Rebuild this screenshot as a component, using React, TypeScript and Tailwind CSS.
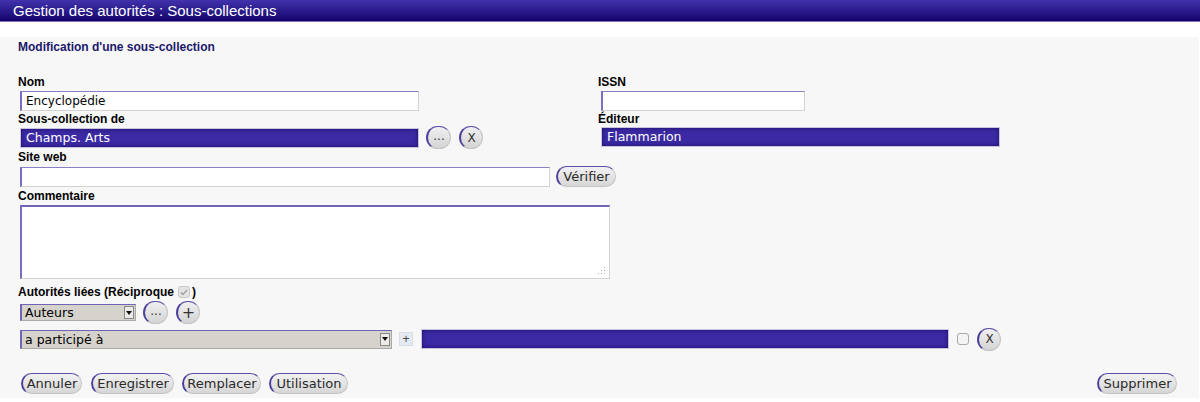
import React from 'react';

const labelCls = 'block text-[12px] font-bold leading-[16px] text-black';
const inputCls =
    'h-[20px] bg-white border border-[#d2d2d2] border-t-[#8a80c6] border-l-2 border-l-[#7a6fbe] px-[4px] font-["DejaVu_Sans"] text-[12px] leading-[18px] text-black';
const purpleField =
    'h-[20px] bg-[#3b2aa3] border border-[#c8c4dc] shadow-[inset_0_0_4px_rgba(20,5,90,0.8)] px-[5px] font-["DejaVu_Sans"] text-[12.5px] leading-[18px] text-white';

function Pill({ children, className = '' }: { children: React.ReactNode; className?: string }) {
    return (
        <button
            className={`h-[21px] rounded-full bg-gradient-to-b from-[#f2f2f2] to-[#d6d6d6] border border-[#c4c4c4] border-l-2 border-l-[#4b3f9c] border-t-[#5a4fa6] px-0 text-center font-["DejaVu_Sans"] text-[13px] leading-[18px] text-[#2a2a2a] ${className}`}
        >
            {children}
        </button>
    );
}

function Circle({ children, w = 'w-[25px]' }: { children: React.ReactNode; w?: string }) {
    return (
        <button
            className={`${w} h-[23px] shrink-0 rounded-full bg-gradient-to-b from-[#f0f0f0] to-[#d4d4d4] border border-[#c4c4c4] border-l-2 border-l-[#4b3f9c] border-t-[#5a4fa6] flex items-center justify-center font-["DejaVu_Sans"] text-[12px] leading-none text-[#333]`}
        >
            {children}
        </button>
    );
}

function SelectBox({ value, className }: { value: string; className: string }) {
    return (
        <div
            className={`flex items-center bg-[#d6d2cc] border border-[#aaa] border-t-[#6f64b6] border-l-2 border-l-[#6f64b6] ${className}`}
        >
            <span className="flex-1 pl-[3px] font-['DejaVu_Sans'] text-[12.5px] leading-[15px] text-black whitespace-nowrap">{value}</span>
            <span className="w-[10px] h-[13px] mr-[1px] bg-[#ecebe8] border border-[#888] flex items-center justify-center">
                <svg width="6" height="4" viewBox="0 0 6 4"><path d="M0 0h6L3 4z" fill="#111" /></svg>
            </span>
        </div>
    );
}

export default function App() {
    return (
        <div className="w-[1200px] h-[402px] bg-white font-['Liberation_Sans',Arial,sans-serif] overflow-hidden">
            {/* Header */}
            <div className="h-[22px] bg-gradient-to-b from-[#4232ad] to-[#15006c] border-b border-[#7d72c0] pl-[13px] text-white text-[15px] leading-[21px]">
                Gestion des autorités : Sous-collections
            </div>
            <div className="h-[15px]" />

            {/* Panel */}
            <div className="h-[361px] mr-[1px] bg-[#f7f7f7] pl-[18px] pr-[21px] pt-[3px] flex flex-col">
                <div className="text-[12px] font-bold leading-[14px] text-[#1c176b]">Modification d'une sous-collection</div>

                <div className="mt-[20px] grid grid-cols-[580px_1fr]">
                    <div>
                        <label className={labelCls}>Nom</label>
                        <div className={`${inputCls} ml-[2px] mt-[1px] w-[399px]`}>Encyclopédie</div>
                    </div>
                    <div>
                        <label className={labelCls}>ISSN</label>
                        <div className={`${inputCls} ml-[3px] mt-[1px] w-[204px]`} />
                    </div>
                    <div>
                        <label className={labelCls}>Sous-collection de</label>
                        <div className="flex items-center h-[21px]">
                            <div className={`${purpleField} ml-[2px] w-[399px]`}>Champs. Arts</div>
                            <div className="ml-[7px]">
                                <Circle>
                                    <span className="text-[12px] -mt-[3px]">...</span>
                                </Circle>
                            </div>
                            <div className="ml-[8px]">
                                <Circle w="w-[24px]">X</Circle>
                            </div>
                        </div>
                    </div>
                    <div>
                        <label className={labelCls}>Éditeur</label>
                        <div className={`${purpleField} ml-[3px] w-[399px]`}>Flammarion</div>
                    </div>
                </div>

                <label className={`${labelCls} mt-[1px]`}>Site web</label>
                <div className="flex items-center mt-[1px]">
                    <div className={`${inputCls} ml-[2px] w-[530px]`} />
                    <Pill className="ml-[6px] w-[60px]">Vérifier</Pill>
                </div>

                <label className={`${labelCls} mt-[1px]`}>Commentaire</label>
                <div className="relative ml-[2px] mt-[1px] w-[590px] h-[74px] bg-white border border-[#d2d2d2] border-t-2 border-t-[#6f64b6] border-l-2 border-l-[#7a6fbe]">
                    <svg className="absolute right-[3px] bottom-[3px]" width="8" height="8" viewBox="0 0 8 8">
                        <g fill="#b0b0b0">
                            <rect x="6" y="0" width="1" height="1" />
                            <rect x="6" y="3" width="1" height="1" />
                            <rect x="3" y="3" width="1" height="1" />
                            <rect x="6" y="6" width="1" height="1" />
                            <rect x="3" y="6" width="1" height="1" />
                            <rect x="0" y="6" width="1" height="1" />
                        </g>
                    </svg>
                </div>

                <label className={`${labelCls} mt-[5px] flex items-center`}>
                    Autorités liées (Réciproque
                    <span className="ml-[4px] mr-[2px] w-[12px] h-[12px] rounded-[3px] bg-[#e4e4e4] border border-[#c8c8c8] flex items-center justify-center">
                        <svg width="8" height="7" viewBox="0 0 8 7">
                            <path d="M1 3.5L3 5.5L7 1" fill="none" stroke="#999" strokeWidth="1.2" />
                        </svg>
                    </span>
                    )
                </label>
                <div className="flex items-center mt-[1px] h-[23px]">
                    <SelectBox value="Auteurs" className="ml-[2px] w-[116px] h-[17px]" />
                    <div className="ml-[7px]">
                        <Circle>
                            <span className="text-[12px] -mt-[3px]">...</span>
                        </Circle>
                    </div>
                    <div className="ml-[8px]">
                        <Circle w="w-[24px]">
                            <span className="text-[16px]">+</span>
                        </Circle>
                    </div>
                </div>

                <div className="flex items-center mt-[4px] h-[22px]">
                    <SelectBox value="a participé à" className="ml-[2px] w-[372px] h-[19px]" />
                    <span className="ml-[7px] w-[14px] h-[14px] bg-[#e4eaf2] border border-[#d8dde6] flex items-center justify-center text-[#444] text-[12px] leading-none">
                        +
                    </span>
                    <div className="ml-[8px] w-[528px] h-[20px] bg-[#3b2aa3] border border-[#c8c4dc] shadow-[inset_0_0_4px_rgba(20,5,90,0.8)]" />
                    <span className="ml-[8px] w-[12px] h-[12px] rounded-[3px] bg-[#f4f4f4] border border-[#aaa]" />
                    <div className="ml-[8px]">
                        <Circle w="w-[24px]">X</Circle>
                    </div>
                </div>

                <div className="mt-[23px] flex items-center">
                    <Pill className="ml-[3px] w-[61px]">Annuler</Pill>
                    <Pill className="ml-[9px] w-[83px]">Enregistrer</Pill>
                    <Pill className="ml-[8px] w-[79px]">Remplacer</Pill>
                    <Pill className="ml-[8px] w-[79px]">Utilisation</Pill>
                    <Pill className="ml-auto mr-[1px] w-[80px]">Supprimer</Pill>
                </div>
            </div>
        </div>
    );
}
